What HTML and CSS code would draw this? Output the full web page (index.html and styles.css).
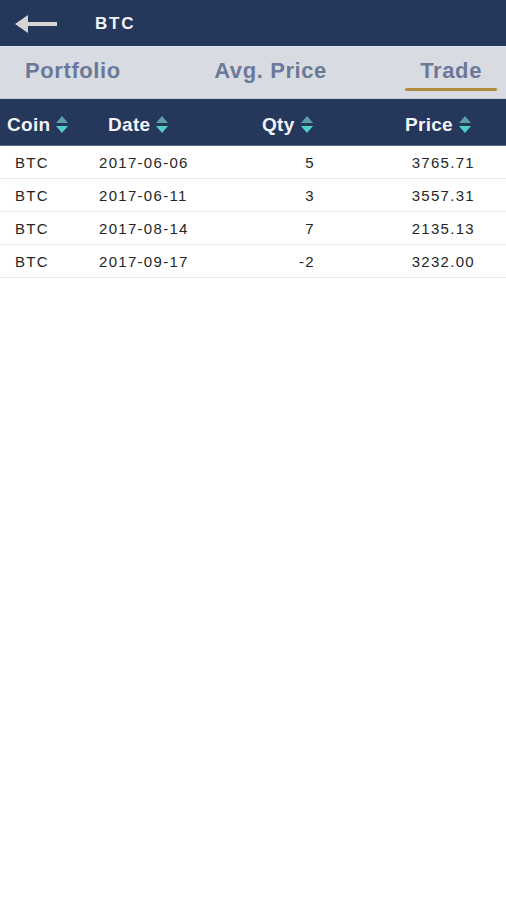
FILE: index.html
```html
<!DOCTYPE html>
<html lang="en">
<head>
  <meta charset="UTF-8" />
  <meta name="viewport" content="width=device-width, initial-scale=1.0"/>
  <title>BTC – Trades</title>
  <link rel="stylesheet" href="styles.css">
</head>
<body>

  <header class="topbar">
    <a class="back" href="#">
      <svg width="44" height="20" viewBox="0 0 44 20">
        <path d="M0 10 L13 1 L13 8 L42 8 L42 12 L13 12 L13 19 Z" fill="#d4d4d4"/>
      </svg>
    </a>
    <span class="title">BTC</span>
  </header>

  <nav class="tabs">
    <a class="tab" href="#">Portfolio</a>
    <a class="tab" href="#">Avg. Price</a>
    <a class="tab active" href="#">Trade</a>
  </nav>

  <div class="table">
    <div class="head">
      <div class="th th-coin">Coin <span class="sort"></span></div>
      <div class="th th-date">Date <span class="sort"></span></div>
      <div class="th th-qty">Qty <span class="sort"></span></div>
      <div class="th th-price">Price <span class="sort"></span></div>
    </div>

    <div class="row">
      <div class="td td-coin">BTC</div>
      <div class="td td-date">2017-06-06</div>
      <div class="td td-qty">5</div>
      <div class="td td-price">3765.71</div>
    </div>
    <div class="row">
      <div class="td td-coin">BTC</div>
      <div class="td td-date">2017-06-11</div>
      <div class="td td-qty">3</div>
      <div class="td td-price">3557.31</div>
    </div>
    <div class="row">
      <div class="td td-coin">BTC</div>
      <div class="td td-date">2017-08-14</div>
      <div class="td td-qty">7</div>
      <div class="td td-price">2135.13</div>
    </div>
    <div class="row">
      <div class="td td-coin">BTC</div>
      <div class="td td-date">2017-09-17</div>
      <div class="td td-qty">-2</div>
      <div class="td td-price">3232.00</div>
    </div>
  </div>

</body>
</html>
```

FILE: styles.css
```css
* {
  margin: 0;
  padding: 0;
  box-sizing: border-box;
}

body, html {
  height: 100%;
  background: #fff;
  font-family: "Liberation Sans", Arial, sans-serif;
}

a {
  text-decoration: none;
}

.topbar {
  height: 47px;
  background: #25375a;
  border-bottom: 1px solid #dfe3ea;
  display: flex;
  align-items: center;
  padding-left: 15px;
}

.back {
  display: flex;
  width: 44px;
  margin-top: 1px;
}

.title {
  margin-left: 36px;
  margin-top: 2px;
  color: #f2f4fa;
  font-weight: bold;
  font-size: 17px;
  letter-spacing: 1.8px;
}

.tabs {
  height: 52px;
  background: #d8dce2;
  border-bottom: 1px solid #c4cad4;
  display: flex;
  justify-content: space-between;
  padding: 0 9px 0 10px;
}

.tab {
  position: relative;
  padding: 11px 15px 0;
  color: #6b7999;
  font-weight: bold;
  font-size: 22px;
  letter-spacing: 0.6px;
}

.tab.active::after {
  content: "";
  position: absolute;
  left: 0;
  right: 0;
  bottom: 7px;
  height: 3px;
  border-radius: 2px;
  background: #b08a3e;
}

.head, .row {
  display: grid;
  grid-template-columns: 95px 135px 130px 1fr;
  align-items: center;
}

.head {
  height: 47px;
  padding-top: 5px;
  background: #25375a;
  border-bottom: 1px solid #5d6a86;
}

.th {
  display: flex;
  align-items: center;
  color: #f2f4fa;
  font-weight: bold;
  font-size: 19px;
  letter-spacing: 0.3px;
}

.th-coin { padding-left: 7px; }
.th-date { padding-left: 13px; }
.th-qty { padding-left: 32px; }
.th-price { padding-left: 45px; }

.sort {
  display: inline-flex;
  flex-direction: column;
  gap: 3px;
  margin-left: 6px;
  margin-top: -1px;
}

.sort::before, .sort::after {
  content: "";
  width: 0;
  height: 0;
  border-left: 6.5px solid transparent;
  border-right: 6.5px solid transparent;
}

.sort::before {
  border-bottom: 7px solid #5e9ea6;
}

.sort::after {
  border-top: 7px solid #4fd0c6;
}

.row {
  height: 33px;
  border-bottom: 1px solid #ececec;
}

.td {
  color: #262626;
  font-size: 15px;
  letter-spacing: 1.3px;
}

.td-coin { padding-left: 15px; }
.td-date { padding-left: 4px; }
.td-qty { text-align: right; padding-right: 45px; }
.td-price { text-align: right; padding-right: 31px; }
```
